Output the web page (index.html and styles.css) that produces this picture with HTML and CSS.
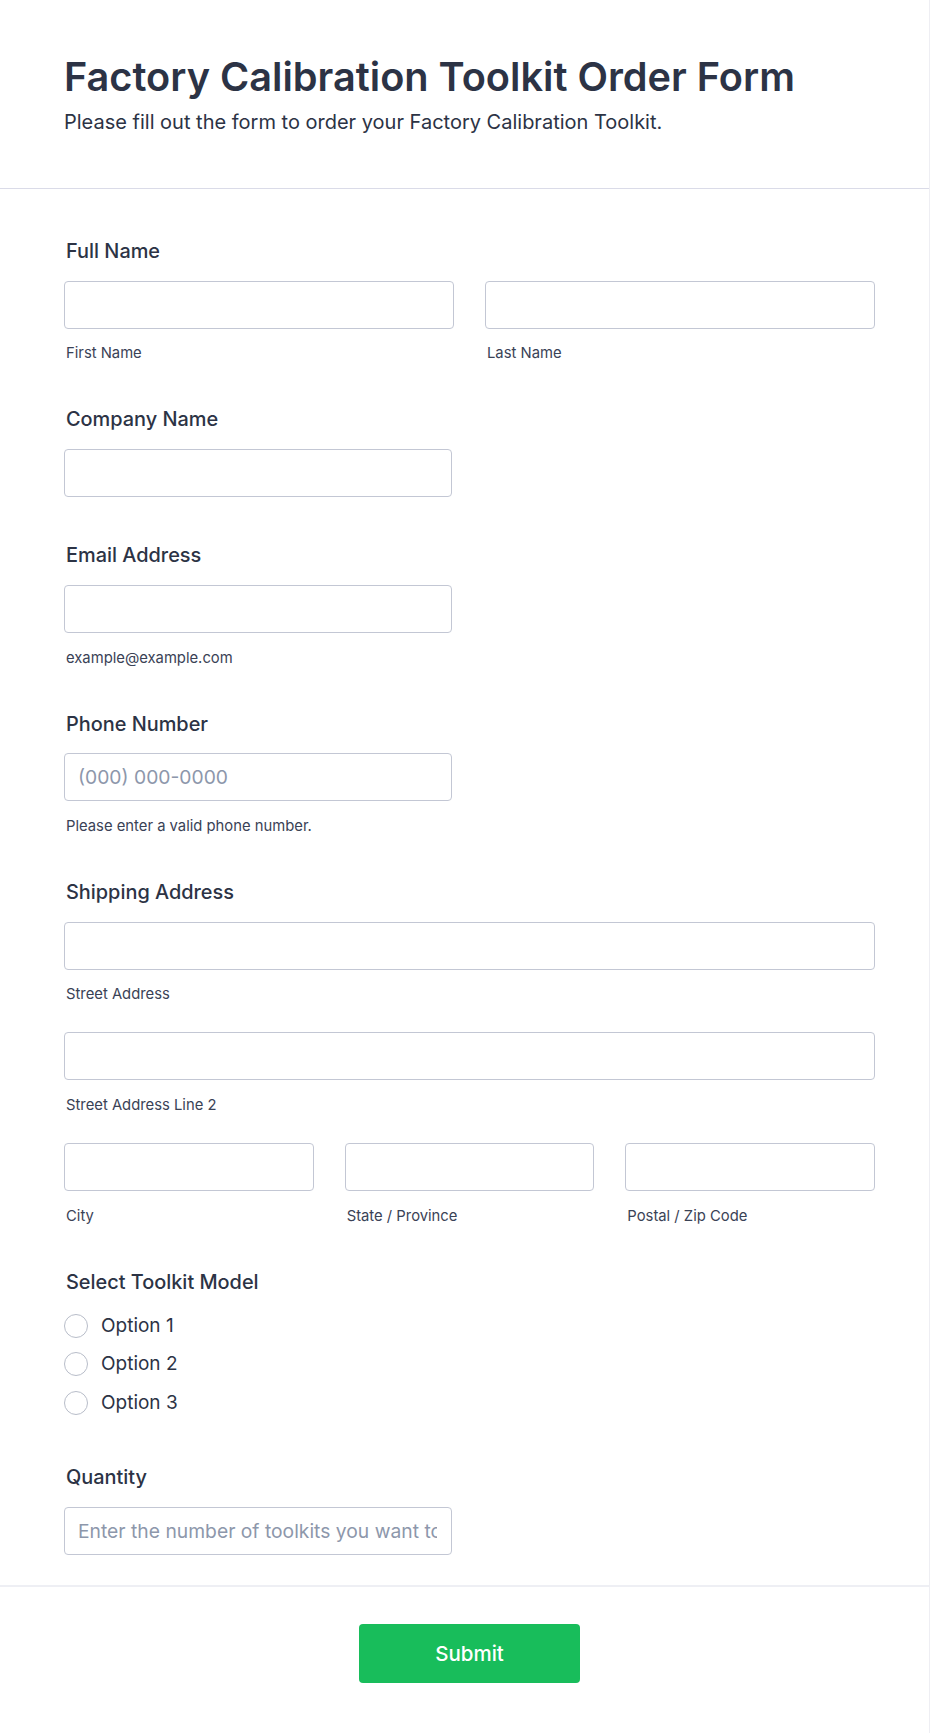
FILE: index.html
```html
<!DOCTYPE html>
<html lang="en">
<head>
<meta charset="utf-8">
<title>Factory Calibration Toolkit Order Form</title>
<link rel="stylesheet" href="styles.css">
</head>
<body>
<div class="page">
  <header class="header">
    <h1 class="title">Factory Calibration Toolkit Order Form</h1>
    <p class="subtitle">Please fill out the form to order your Factory Calibration Toolkit.</p>
  </header>
  <main class="body">
    <div class="field">
      <div class="label">Full Name</div>
      <div class="cols cols-2">
        <div class="sub"><input class="input" type="text"><div class="sublabel">First Name</div></div>
        <div class="sub"><input class="input" type="text"><div class="sublabel">Last Name</div></div>
      </div>
    </div>
    <div class="field nosub">
      <div class="label">Company Name</div>
      <input class="input half" type="text">
    </div>
    <div class="field">
      <div class="label">Email Address</div>
      <input class="input half" type="text">
      <div class="sublabel">example@example.com</div>
    </div>
    <div class="field">
      <div class="label">Phone Number</div>
      <input class="input half" type="text" placeholder="(000) 000-0000">
      <div class="sublabel">Please enter a valid phone number.</div>
    </div>
    <div class="field">
      <div class="label">Shipping Address</div>
      <div class="stack">
        <div class="sub"><input class="input" type="text"><div class="sublabel">Street Address</div></div>
        <div class="sub"><input class="input" type="text"><div class="sublabel">Street Address Line 2</div></div>
        <div class="cols cols-3">
          <div class="sub"><input class="input" type="text"><div class="sublabel">City</div></div>
          <div class="sub"><input class="input" type="text"><div class="sublabel">State / Province</div></div>
          <div class="sub"><input class="input" type="text"><div class="sublabel">Postal / Zip Code</div></div>
        </div>
      </div>
    </div>
    <div class="field radios-field">
      <div class="label">Select Toolkit Model</div>
      <div class="radios">
        <label class="option"><input class="radio" type="radio" name="model"><span>Option 1</span></label>
        <label class="option"><input class="radio" type="radio" name="model"><span>Option 2</span></label>
        <label class="option"><input class="radio" type="radio" name="model"><span>Option 3</span></label>
      </div>
    </div>
    <div class="field quantity">
      <div class="label">Quantity</div>
      <input class="input half" type="text" placeholder="Enter the number of toolkits you want to order">
    </div>
  </main>
  <footer class="footer">
    <button class="submit" type="button">Submit</button>
  </footer>
</div>
</body>
</html>
```

FILE: styles.css
```css
* { box-sizing: border-box; }

html, body {
  margin: 0;
  padding: 0;
  background: #ffffff;
}

body {
  font-family: "Inter", "Noto Sans", "Liberation Sans", sans-serif;
  color: #2c3345;
}

.page {
  width: 930px;
  min-height: 1733px;
  border-right: 1px solid #eeeef3;
  background: #ffffff;
}

.header {
  padding: 54px 54px 54.4px 64px;
  border-bottom: 1px solid #dadbe8;
}

.title {
  margin: 0;
  font-size: 39.7px;
  line-height: 46px;
  font-weight: 600;
  letter-spacing: 0;
  color: #2c3345;
}

.subtitle {
  margin: 9.6px 0 0;
  font-size: 20px;
  line-height: 24px;
  font-weight: 400;
  color: #2c3345;
}

.body {
  padding: 49.8px 54px 30px 64px;
}

.field + .field {
  margin-top: 44px;
}

.field.nosub {
  padding-bottom: 2.2px;
}

.field.quantity {
  margin-top: 50.6px;
}

.label {
  font-size: 19.9px;
  line-height: 24px;
  font-weight: 500;
  padding-left: 2px;
  margin-bottom: 17.8px;
  color: #2c3345;
}

.input {
  display: block;
  width: 100%;
  height: 48px;
  margin: 0;
  padding: 0 14px 0 13px;
  border: 1px solid #c3c7d4;
  border-radius: 4px;
  background: #ffffff;
  font-family: inherit;
  font-size: 19.3px;
  color: #2c3345;
  outline: none;
}

.input.half {
  width: 388px;
}

.input::placeholder {
  color: #8d97ab;
  opacity: 1;
}

.sublabel {
  margin-top: 14.6px;
  padding-left: 2px;
  font-size: 14.8px;
  line-height: 20px;
  color: #3a4256;
}

.cols {
  display: grid;
  column-gap: 31px;
}

.cols-2 { grid-template-columns: 1fr 1fr; }
.cols-3 { grid-template-columns: 1fr 1fr 1fr; }

.stack {
  display: flex;
  flex-direction: column;
  gap: 28px;
}

.radios {
  display: flex;
  flex-direction: column;
  gap: 14.5px;
  margin-top: 20px;
}

.option {
  display: flex;
  align-items: center;
  gap: 13px;
  height: 24px;
  font-size: 19px;
  line-height: 24px;
  color: #2c3345;
}

.radio {
  appearance: none;
  -webkit-appearance: none;
  margin: 0;
  width: 24px;
  height: 24px;
  border: 1px solid #b8bdc9;
  border-radius: 50%;
  background: #ffffff;
  flex: none;
}

.footer {
  border-top: 2px solid #eeeff4;
  padding: 36.7px 54px 50px 64px;
  display: flex;
  justify-content: center;
}

.submit {
  width: 221px;
  height: 59px;
  border: none;
  border-radius: 4px;
  background: #18bd5b;
  color: #ffffff;
  font-family: inherit;
  font-size: 20.5px;
  font-weight: 500;
  cursor: pointer;
}
```
